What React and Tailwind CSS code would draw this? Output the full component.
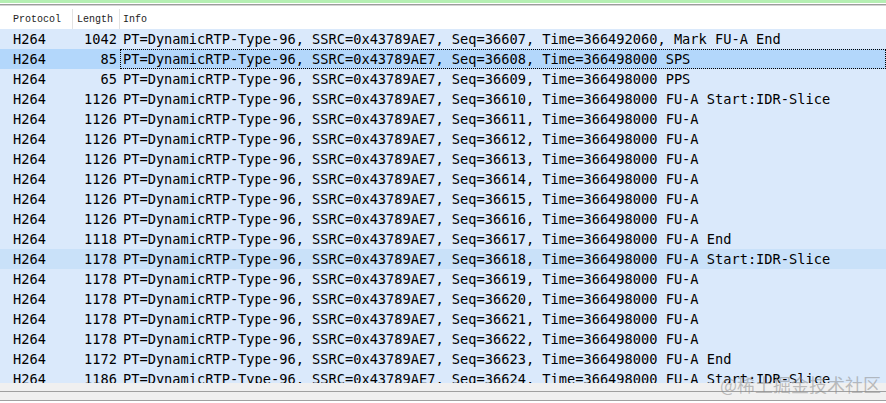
const rows = [
  { len: 1042, seq: 36607, time: "366492060,", tail: "Mark FU-A End" },
  { len: 85, seq: 36608, time: "366498000", tail: "SPS", selected: true },
  { len: 65, seq: 36609, time: "366498000", tail: "PPS" },
  { len: 1126, seq: 36610, time: "366498000", tail: "FU-A Start:IDR-Slice" },
  { len: 1126, seq: 36611, time: "366498000", tail: "FU-A" },
  { len: 1126, seq: 36612, time: "366498000", tail: "FU-A" },
  { len: 1126, seq: 36613, time: "366498000", tail: "FU-A" },
  { len: 1126, seq: 36614, time: "366498000", tail: "FU-A" },
  { len: 1126, seq: 36615, time: "366498000", tail: "FU-A" },
  { len: 1126, seq: 36616, time: "366498000", tail: "FU-A" },
  { len: 1118, seq: 36617, time: "366498000", tail: "FU-A End" },
  { len: 1178, seq: 36618, time: "366498000", tail: "FU-A Start:IDR-Slice", related: true },
  { len: 1178, seq: 36619, time: "366498000", tail: "FU-A" },
  { len: 1178, seq: 36620, time: "366498000", tail: "FU-A" },
  { len: 1178, seq: 36621, time: "366498000", tail: "FU-A" },
  { len: 1178, seq: 36622, time: "366498000", tail: "FU-A" },
  { len: 1172, seq: 36623, time: "366498000", tail: "FU-A End" },
  { len: 1186, seq: 36624, time: "366498000", tail: "FU-A Start:IDR-Slice" },
];

const PacketRow = ({ row }) => {
  const bg = row.selected
    ? "bg-[#b3d7fb]"
    : row.related
    ? "bg-[#c9e1f9]"
    : "bg-[#dae9fb]";
  return (
    <div className={`flex h-[20px] shrink-0 items-center whitespace-nowrap text-black ${bg}`}>
      <div className="w-[73px] shrink-0 pl-[13px]">H264</div>
      <div className="w-[47px] shrink-0 pr-[3px] text-right">{row.len}</div>
      <div
        className={`flex h-full flex-1 items-center pl-[2px] ${
          row.selected ? "border border-dotted border-black" : "border border-transparent"
        }`}
      >
        PT=DynamicRTP-Type-96, SSRC=0x43789AE7, Seq={row.seq}, Time={row.time} {row.tail}
      </div>
    </div>
  );
};

export default function App() {
  return (
    <div className="relative flex h-[403px] w-[886px] flex-col overflow-hidden bg-white">
      {/* top strip */}
      <div className="h-[3px] bg-[#b5efb3]" />
      <div className="h-[1px] bg-white" />
      <div className="h-[1px] bg-[#9c9c9c]" />
      <div className="h-[1px] bg-[#d4d4d4]" />
      <div className="h-[3px] bg-white" />

      {/* header */}
      <div className="flex h-[20px] shrink-0 items-center bg-white font-['Liberation_Mono',monospace] text-[10px] text-[#222]">
        <div className="flex h-full w-[73px] items-center border-r border-[#e3e3e3] pl-[13px]">Protocol</div>
        <div className="flex h-full w-[47px] items-center border-r border-[#e3e3e3] pl-[4px]">Length</div>
        <div className="flex h-full flex-1 items-center pl-[3px]">Info</div>
      </div>

      {/* packet list */}
      <div className="flex h-[354px] flex-col overflow-hidden font-['DejaVu_Sans_Mono',monospace] text-[13.66px]">
        {rows.map((row) => (
          <PacketRow key={row.seq} row={row} />
        ))}
      </div>

      {/* bottom splitter */}
      <div className="h-[8px] bg-[#f0f0f0]" />
      <div className="h-[1px] bg-[#a0a0a0]" />
      <div className="h-[8px] bg-[#f0f0f0]" />
      <div className="h-[1px] bg-[#a0a0a0]" />
      <div className="h-[2px] bg-white" />

      <div className="pointer-events-none absolute left-[720px] top-[371px] font-['Noto_Sans_CJK_SC',serif] text-[18px] text-[rgba(140,140,140,0.55)]">
        @稀土掘金技术社区
      </div>
    </div>
  );
}
